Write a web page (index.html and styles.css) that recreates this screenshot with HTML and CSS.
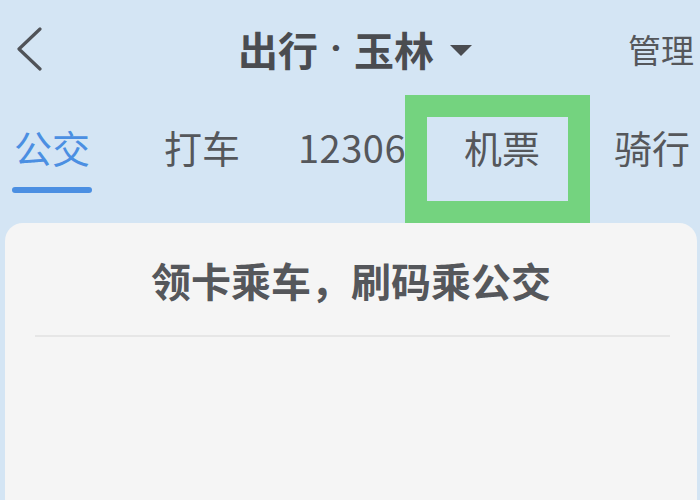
FILE: index.html
```html
<!DOCTYPE html>
<html lang="zh-CN">
<head>
<meta charset="utf-8">
<link rel="stylesheet" href="styles.css">
</head>
<body>
<div class="page">
  <header class="topbar">
    <div class="back">
      <svg width="28" height="44" viewBox="0 0 28 44"><polyline points="24,2 3,22 24,42" fill="none" stroke="#505358" stroke-width="3.2" stroke-linecap="round" stroke-linejoin="round"/></svg>
    </div>
    <div class="title">出行<span class="dot">·</span>玉林<span class="caret"></span></div>
    <div class="manage">管理</div>
  </header>
  <nav class="tabs">
    <div class="tab active"><span class="label">公交</span><span class="bar"></span></div>
    <div class="tab"><span class="label">打车</span></div>
    <div class="tab"><span class="label num">12306</span></div>
    <div class="tab"><span class="label">机票</span></div>
    <div class="tab"><span class="label">骑行</span></div>
  </nav>
  <section class="card">
    <h2 class="card-title">领卡乘车，刷码乘公交</h2>
    <div class="divider"></div>
  </section>
  <div class="highlight"></div>
</div>
</body>
</html>
```
FILE: styles.css
```css
html, body {
  margin: 0;
  padding: 0;
}
body {
  width: 700px;
  height: 500px;
  overflow: hidden;
  background: #d4e5f4;
  font-family: "Noto Sans CJK SC", "Roboto", sans-serif;
  color: #4d4f53;
}
.page {
  position: relative;
  height: 500px;
  display: flex;
  flex-direction: column;
}
.topbar {
  height: 98px;
  display: grid;
  grid-template-columns: 1fr auto 1fr;
  align-items: center;
}
.back {
  padding-left: 16px;
  display: flex;
  align-items: center;
}
.title {
  font-size: 40px;
  font-weight: 700;
  line-height: 1;
  color: #4a4c50;
  display: flex;
  align-items: center;
  padding-left: 10px;
}
.dot {
  font-family: "Roboto", sans-serif;
  font-weight: 700;
  padding: 0 12px;
}
.caret {
  display: inline-block;
  width: 0;
  height: 0;
  border-left: 11px solid transparent;
  border-right: 11px solid transparent;
  border-top: 11px solid #4a4c50;
  margin-left: 16px;
  margin-top: 2px;
}
.manage {
  justify-self: end;
  padding-right: 6px;
  font-size: 33px;
  line-height: 1;
  color: #55575b;
}
.tabs {
  height: 125px;
  display: grid;
  grid-template-columns: repeat(5, 150px);
  margin-left: -23px;
}
.tab {
  display: flex;
  flex-direction: column;
  align-items: center;
  padding-top: 29px;
}
.label {
  font-size: 38px;
  line-height: 40px;
  color: #55575b;
  font-family: "Noto Sans CJK SC", sans-serif;
}
.label.num {
  letter-spacing: 0.5px;
}
.tab.active .label {
  color: #4b8fe2;
}
.bar {
  width: 80px;
  height: 6px;
  border-radius: 3px;
  background: #4b8fe2;
  margin-top: 20px;
}
.card {
  flex: 1;
  margin: 0 3px 0 5px;
  background: #f5f5f5;
  border-radius: 18px 18px 0 0;
}
.card-title {
  margin: 0;
  padding-top: 37px;
  text-align: center;
  font-size: 40px;
  line-height: 40px;
  font-weight: 700;
  color: #55575b;
}
.divider {
  margin: 35px 27px 0 30px;
  height: 2px;
  background: #e6e6e6;
}
.highlight {
  position: absolute;
  left: 405px;
  top: 95px;
  width: 185px;
  height: 128px;
  box-sizing: border-box;
  border: 22px solid #74d37f;
}
```
